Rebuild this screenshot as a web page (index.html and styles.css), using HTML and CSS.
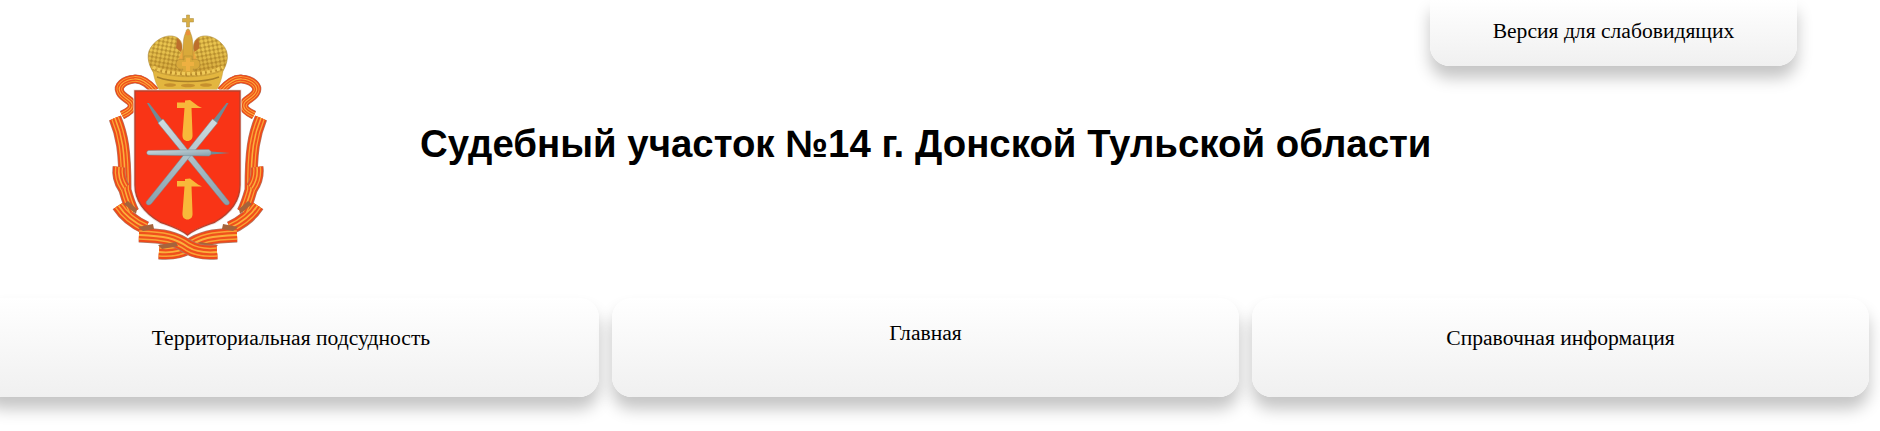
FILE: index.html
```html
<!DOCTYPE html>
<html lang="ru">
<head>
    <meta charset="UTF-8">
    <meta name="viewport" content="width=device-width, initial-scale=1.0">
    <title>Судебный участок №14 г. Донской Тульской области</title>
    <link rel="stylesheet" href="styles.css">
</head>
<body>
    <header class="top">
        <svg class="emblem" viewBox="100 10 180 260" width="180" height="260" role="img" aria-label="Герб Тульской области">
            <defs>
                <pattern id="beads" width="4.2" height="4.2" patternUnits="userSpaceOnUse" patternTransform="rotate(10)">
                    <rect width="4.2" height="4.2" fill="#b8902f"/>
                    <circle cx="2.1" cy="2.1" r="1.8" fill="#e9c44f"/>
                </pattern>
                <linearGradient id="domeShade" x1="0" y1="0" x2="0" y2="1">
                    <stop offset="0.3" stop-color="#a86c14" stop-opacity="0"/>
                    <stop offset="1" stop-color="#a86c14" stop-opacity="0.4"/>
                </linearGradient>
                <linearGradient id="steel" x1="0" y1="0" x2="1" y2="1">
                    <stop offset="0" stop-color="#cfdde2"/>
                    <stop offset="1" stop-color="#86a0ab"/>
                </linearGradient>

                <g id="bandsBack">
                    <path class="rb w9" d="M155 91 C149 84 142 78 134 79 C124 80 117 86 120 92 C123 99 134 100 132 107 C131 111 126 113 122 115"/>
                    <path class="rb w13" d="M115 118 C122 135 125 150 125 190 C127 197 129 204 133 212"/>
                    <path class="rb w14" d="M118.5 205.5 C124 214 133 222 146 228"/>
                </g>
                <g id="bandsFront">
                    <path class="rb w13" d="M119 167 C118 175 120 182 124 188"/>
                    <path class="rb w15" d="M139 235 C165 236 175 238 188 247 C196 252 205 253 217 252"/>
                </g>

                <g id="ribbonHalf">
                    <use href="#bandsBack" class="l1"/>
                    <use href="#bandsBack" class="l2"/>
                    <use href="#bandsBack" class="l3"/>
                    <use href="#bandsBack" class="l4"/>
                    <use href="#bandsBack" class="l5"/>
                    <path class="fold" d="M124 204 L128 201 L137 209 L136 214 Z"/>
                    <use href="#bandsFront" class="l1"/>
                    <use href="#bandsFront" class="l2"/>
                    <use href="#bandsFront" class="l3"/>
                    <use href="#bandsFront" class="l4"/>
                    <use href="#bandsFront" class="l5"/>
                    <path class="fold" d="M138 227 L153 224 L154 229 L143 231 Z"/>
                    <path class="fold" d="M158 245 L176 242 L178 246 L162 249 Z"/>
                </g>

                <g id="crownHalf">
                    <path class="dome" d="M188 78 L160 80 C151 72 146 60 149 51 C153 41 164 35 172 36 C179 37 182 41 182 47 L182 60 L188 60 Z"/>
                    <path class="dome-shade" d="M188 78 L160 80 C151 72 146 60 149 51 C153 41 164 35 172 36 C179 37 182 41 182 47 L182 60 L188 60 Z"/>
                    <path class="shade" d="M177 38 C180 40 182 43 182 48 L181 52 L176 48 Z"/>
                    <path class="glow" d="M183 48 L183 64 L177 64 Z"/>
                </g>

                <g id="tool">
                    <path class="spike" d="M147 103 L149 103 L163 121 L159 124 Z"/>
                    <path class="blade" d="M158 123 L163 119 L229 201.5 C230 203 229 205 227 205 C226 205 225 204.5 224 203.5 Z"/>
                </g>
                <g id="hammer">
                    <path class="gold" d="M177 102.5 L185 102.5 L185 100.5 L190 100 L198 106 L202 108 L191.5 108 L192.5 134 C193 139 190.5 141 187.5 141 C184.5 141 182 139 182.5 134 L184.5 108 L177 108 Z"/>
                </g>
            </defs>

            <!-- ribbon -->
            <use href="#ribbonHalf" transform="translate(376 0) scale(-1 1)"/>
            <use href="#ribbonHalf"/>

            <!-- crown -->
            <use href="#crownHalf" transform="translate(375.5 0) scale(-1 1)"/>
            <use href="#crownHalf"/>
            <path class="stem" d="M183 52 C183 40 184 36 186 32 C186 28 190 28 190 32 C192 36 193 40 193 52 L193 62 L183 62 Z"/>
            <circle class="gem" cx="188" cy="33" r="2.4"/>
            <path class="cross" d="M186.5 15 L189.5 15 L189.5 18.5 L193.5 18.5 L193.5 22 L189.5 22 L189.5 27 L186.5 27 L186.5 22 L182.5 22 L182.5 18.5 L186.5 18.5 Z"/>
            <path class="stem" d="M184 56 L192 56 L192 60 C196 58 200 60 200 64 C200 68 196 70 193 69 L196 74 L180 74 L183 69 C180 70 176 68 176 64 C176 60 180 58 184 60 Z"/>
            <path class="lobes" d="M186 58 L190 58 L190 62 L194 62 L194 66 L190 66 L190 71 L186 71 L186 66 L182 66 L182 62 L186 62 Z"/>
            <path class="scallops" d="M153 67 C168 76 208 76 223 67"/>
            <path class="band" d="M153 70 C168 79 208 79 223 70 C222 79 219 86 216 91 L160 91 C157 86 154 79 153 70 Z"/>
            <path class="band-line" d="M157 77 C172 83 204 83 219 77"/>
            <ellipse class="pearl" cx="170" cy="85" rx="6" ry="1.8"/>
            <ellipse class="pearl" cx="188" cy="85.5" rx="7" ry="1.8"/>
            <ellipse class="pearl" cx="206" cy="85" rx="6" ry="1.8"/>

            <!-- shield -->
            <path class="shield-halo" d="M133.5 89.5 L241.5 89.5 L241.5 185 C241.5 201 233 213 216 223.5 C204 227.5 194 231 187.5 237 C181 231 171 227.5 159 223.5 C142 213 133.5 201 133.5 185 Z"/>
            <path class="shield" d="M135 91 L240 91 L240 185 C240 200 232 212 215 222 C204 226 194 229 187.5 235 C181 229 171 226 160 222 C143 212 135 200 135 185 Z"/>

            <!-- tools -->
            <use href="#hammer"/>
            <use href="#hammer" transform="translate(0 78.5)"/>
            <use href="#tool"/>
            <use href="#tool" transform="translate(375.5 0) scale(-1 1)"/>
            <path class="blade" d="M149 150.5 L209 149.5 L211 151.5 L211 154.5 L209 156 L149 155 C146 155 146 150.5 149 150.5 Z"/>
            <path class="spike" d="M211 151.5 L230 153 L211 154.5 Z"/>
        </svg>

        <h1 class="court-name">Судебный участок №14 г. Донской Тульской области</h1>

        <a class="card version-link" href="#">Версия для слабовидящих</a>
    </header>

    <nav class="main-nav">
        <a class="card nav-item nav-left" href="#">Территориальная подсудность</a>
        <a class="card nav-item nav-home" href="#">Главная</a>
        <a class="card nav-item nav-right" href="#">Справочная информация</a>
    </nav>
</body>
</html>
```

FILE: styles.css
```css
html, body {
    margin: 0;
    padding: 0;
    background: #fff;
    overflow: hidden;
}
body {
    height: 431px;
    font-family: "Liberation Serif", "Times New Roman", serif;
    font-size: 21.6px;
    color: #000;
}

.top {
    display: flex;
    align-items: flex-start;
    height: 298px;
    padding-left: 100px;
}
.emblem {
    flex: none;
    margin-top: 10px;
    filter: blur(0.4px);
}
.court-name {
    flex: none;
    width: 1010px;
    margin: 121px 0 0 140px;
    font-family: "Liberation Sans", Arial, sans-serif;
    font-size: 38.4px;
    font-weight: bold;
    line-height: 46px;
    white-space: nowrap;
}

.card {
    display: block;
    box-sizing: border-box;
    color: #000;
    text-align: center;
    text-decoration: none;
    background: linear-gradient(#fff, #f0f0f0);
    border-radius: 20px;
    box-shadow: 0 12px 16px rgba(0, 0, 0, 0.23);
}
.version-link {
    flex: none;
    width: 367px;
    height: 66px;
    padding-top: 19px;
    line-height: 24px;
    border-radius: 0 0 20px 20px;
}

.main-nav {
    display: flex;
    gap: 13px;
    margin-left: -17px;
}
.nav-item {
    height: 99px;
    padding-top: 28px;
    line-height: 24px;
}
.nav-left {
    width: 616px;
}
.nav-home {
    width: 627px;
    padding-top: 23px;
}
.nav-right {
    width: 617px;
}

/* ribbon: stacked strokes make the stripes */
.rb {
    fill: none;
    stroke-width: calc(var(--w) * var(--k));
}
.w9 { --w: 9px; }
.w13 { --w: 13px; }
.w14 { --w: 14px; }
.w15 { --w: 15px; }
.l1 { --k: 1; stroke: #b07a66; }
.l2 { --k: 0.9; stroke: #ef4a1a; }
.l3 { --k: 0.62; stroke: #f9a436; }
.l4 { --k: 0.42; stroke: #f0501c; }
.l5 { --k: 0.12; stroke: #fbb03c; }
.fold { fill: #a5643c; }

/* crown */
.dome { fill: url(#beads); stroke: #b08d3a; stroke-width: 0.6; }
.dome-shade { fill: url(#domeShade); }
.shade { fill: #bd6f2c; }
.glow { fill: #eda93f; }
.stem { fill: #d9a93a; stroke: #a98232; stroke-width: 0.5; }
.gem { fill: #e98f3a; }
.cross { fill: #d8ae45; stroke: #a98a3c; stroke-width: 0.5; }
.lobes { fill: #eeb041; }
.scallops { fill: none; stroke: #efc957; stroke-width: 3.5; stroke-dasharray: 3 2; }
.band { fill: #e3b63f; stroke: #c09a3a; stroke-width: 0.5; }
.band-line { fill: none; stroke: #a87f28; stroke-width: 1.4; }
.pearl { fill: #c6902e; }

/* shield */
.shield-halo { fill: #e9e4e2; }
.shield { fill: #f93416; stroke: #b9402c; stroke-width: 1.4; }
.gold { fill: #f8b93a; }
.blade { fill: url(#steel); stroke: #6f8b97; stroke-width: 0.5; }
.spike { fill: #6f8b97; }
```
